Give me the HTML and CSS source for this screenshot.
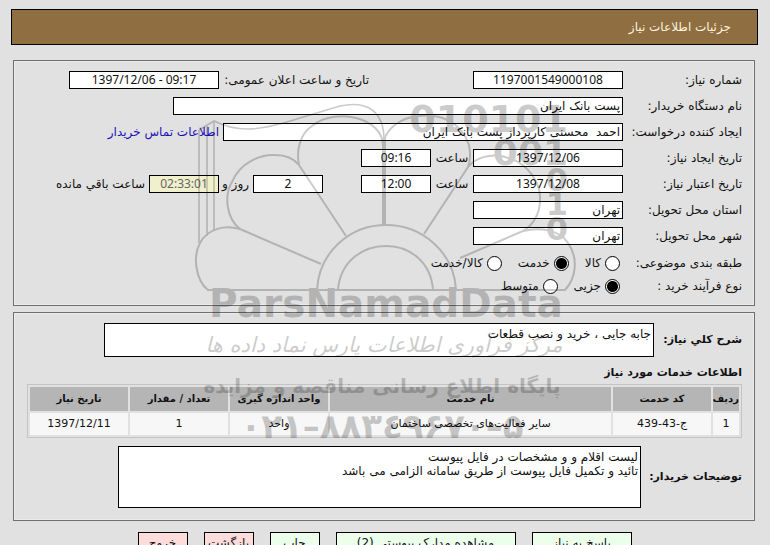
FILE: index.html
```
<!DOCTYPE html>
<html lang="fa" dir="rtl">
<head>
<meta charset="utf-8">
<title>جزئیات اطلاعات نیاز</title>
<link rel="stylesheet" href="styles.css">
</head>
<body>
<main class="page">
  <h1 class="title-bar">جزئیات اطلاعات نیاز</h1>

  <section class="panel request">
    <div class="row">
      <label class="name" for="number">شماره نیاز:</label>
      <input class="box medium number" id="number" value="1197001549000108" readonly>
      <label class="announce" for="announced">تاریخ و ساعت اعلان عمومی:</label>
      <input class="box medium number" id="announced" dir="ltr" value="1397/12/06 - 09:17" readonly>
    </div>
    <div class="row">
      <label class="name" for="buyer">نام دستگاه خریدار:</label>
      <input class="box widest" id="buyer" value="پست بانک ایران" readonly>
    </div>
    <div class="row">
      <label class="name" for="creator">ایجاد کننده درخواست:</label>
      <input class="box wide" id="creator" value="احمد  محسنی کارپرداز پست بانک ایران" readonly>
      <a class="contact" href="#contact">اطلاعات تماس خریدار</a>
    </div>
    <div class="row">
      <label class="name" for="created">تاریخ ایجاد نیاز:</label>
      <input class="box medium number" id="created" value="1397/12/06" readonly>
      <label class="hour" for="created-time">ساعت</label>
      <input class="box small number" id="created-time" value="09:16" readonly>
    </div>
    <div class="row">
      <label class="name" for="valid">تاریخ اعتبار نیاز:</label>
      <input class="box medium number" id="valid" value="1397/12/08" readonly>
      <label class="hour" for="valid-time">ساعت</label>
      <input class="box small number" id="valid-time" value="12:00" readonly>
      <input class="box small number days" id="days" value="2" readonly>
      <label class="days-label" for="days">روز و</label>
      <input class="box small number remaining" id="remaining" value="02:33:01" readonly>
      <label class="after" for="remaining">ساعت باقي مانده</label>
    </div>
    <div class="row">
      <label class="name" for="province">استان محل تحویل:</label>
      <input class="box medium" id="province" value="تهران" readonly>
    </div>
    <div class="row">
      <label class="name" for="city">شهر محل تحویل:</label>
      <input class="box medium" id="city" value="تهران" readonly>
    </div>
    <div class="row options" role="radiogroup" aria-labelledby="kind">
      <span class="name" id="kind">طبقه بندی موضوعی:</span>
      <label class="option"><input type="radio" name="kind">کالا</label>
      <label class="option"><input type="radio" name="kind" checked>خدمت</label>
      <label class="option"><input type="radio" name="kind">کالا/خدمت</label>
    </div>
    <div class="row options" role="radiogroup" aria-labelledby="process">
      <span class="name" id="process">نوع فرآیند خرید :</span>
      <label class="option"><input type="radio" name="process" checked>جزیی</label>
      <label class="option"><input type="radio" name="process">متوسط</label>
    </div>
  </section>

  <section class="panel details">
    <div class="note">
      <label class="strong summary-label" for="summary">شرح کلي نیاز:</label>
      <textarea class="box summary" id="summary" readonly>جابه جایی ، خرید و نصب قطعات</textarea>
    </div>
    <h2 class="strong heading">اطلاعات خدمات مورد نیاز</h2>
    <table class="services">
      <thead>
        <tr><th class="c-row">ردیف</th><th class="c-mid">کد خدمت</th><th>نام خدمت</th><th class="c-mid">واحد اندازه گیری</th><th class="c-mid">تعداد / مقدار</th><th class="c-mid">تاریخ نیاز</th></tr>
      </thead>
      <tbody>
        <tr><td>1</td><td>ج-43-439</td><td>سایر فعالیت‌های تخصصی ساختمان</td><td>واحد</td><td>1</td><td>1397/12/11</td></tr>
      </tbody>
    </table>
    <div class="note">
      <label class="strong remarks-label" for="remarks">توضیحات خریدار:</label>
      <textarea class="box remarks" id="remarks" readonly>لیست اقلام و و مشخصات در فایل پیوست
تائید و تکمیل فایل پیوست از طریق سامانه الزامی می باشد</textarea>
    </div>
  </section>

  <div class="actions">
    <button class="go b-medium" type="button">پاسخ به نیاز</button>
    <button class="go b-wide" type="button">مشاهده مدارک پیوستی (2)</button>
    <button class="go" type="button">چاپ</button>
    <button class="leave" type="button">بازگشت</button>
    <button class="leave" type="button">خروج</button>
  </div>
</main>

<svg class="watermark" viewBox="190 90 390 360" direction="ltr" aria-hidden="true">
  <g fill="none" stroke="#000" stroke-width="2">
    <path d="M199 243V130M207 236V126M214 231V121M199 130L214 121C240 134 262 130 300 118L340 106C368 100 384 112 384 140" stroke-width="1.6"/>
    <path d="M555 290H208C195 280 193 255 200 243C208 228 225 225 240 229L321 264"/>
    <path d="M240 229C226 218 224 195 232 182C240 162 262 154 275 155C287 155 295 160 299 165L346 236"/>
    <path d="M299 165C296 150 300 134 312 126C325 115 345 115 356 118C372 122 383 132 383 146"/>
    <path d="M384 138V225" stroke-width="4"/>
    <path d="M384 140C388 128 400 118 418 116C445 113 462 125 469 145C471 155 470 162 468 167L424 234"/>
    <path d="M468 167C475 158 490 153 505 157C530 163 541 185 540 200C540 215 532 226 523 231L460 258"/>
    <path d="M523 231C540 227 560 230 568 243C578 257 577 277 565 290H555"/>
    <path d="M317 290C319 252 350 225 386 225S454 252 456 290M338 290C340 262 362 246 386 246S431 262 433 290"/>
  </g>
  <g class="wm-bold">
    <text x="568" y="132" font-size="38" text-anchor="end">010101</text>
    <text x="568" y="165" font-size="36" text-anchor="end">001</text>
    <text x="568" y="191" font-size="32" text-anchor="end">0</text>
    <text x="568" y="215" font-size="32" text-anchor="end">1</text>
    <text x="568" y="240" font-size="32" text-anchor="end">0</text>
    <text x="386" y="317" font-size="39" text-anchor="middle">ParsNamadData</text>
    <text x="382" y="393" font-size="20" text-anchor="middle">پایگاه اطلاع رسانی مناقصه و مزایده</text>
    <text x="382" y="438" font-size="34" text-anchor="middle">۰۲۱–۸۸۳٤۹۶۷۰–۵</text>
  </g>
  <text class="wm-script" x="384" y="352" font-size="21" text-anchor="middle">مرکز فرآوری اطلاعات پارس نماد داده ها</text>
</svg>
</body>
</html>
```
FILE: styles.css
```
* { box-sizing: border-box; }
body {
  margin: 0;
  position: relative;
  background: #e1e1e1;
  color: #111;
  font: 12px/18px "DejaVu Sans", sans-serif;
}
.page { padding: 9px 12px 0 11px; }
.title-bar {
  margin: 0 0 15px;
  padding: 8px 26px;
  border: 1px solid #000;
  background: #8f6e41;
  color: #fdf3dc;
  font-size: 12px;
  font-weight: 400;
}
.panel {
  margin: 0 3px 6px 2px;
  padding: 10px 12px;
  border: 1px solid #6f6f6f;
  box-shadow: inset 0 0 0 1px #ececec;
}
.request { padding-bottom: 6px; }
.details { padding-bottom: 12px; }
.row {
  display: flex;
  align-items: center;
  height: 18px;
  margin-bottom: 8px;
  white-space: nowrap;
}
.name { width: 119px; flex: none; }
.box {
  height: 18px;
  margin: 0;
  padding: 0 2px;
  border: 1px solid #000;
  border-radius: 0;
  background: #fff;
  color: #111;
  font: inherit;
  outline: none;
}
.small { width: 70px; }
.medium { width: 150px; }
.wide { width: 400px; }
.widest { width: 450px; }
.number { font-family: "Noto Sans", sans-serif; text-align: center; }
.announce { width: 150px; margin-right: 104px; }
.hour { width: 42px; text-align: center; }
.days { margin-right: 38px; }
.days-label { width: 34px; padding-right: 4px; }
.remaining { background: #f0f0cc; color: #666; }
.after, .contact { margin-right: 4px; }
.contact { color: #1a12b8; text-decoration: none; }
.options { height: 20px; margin-bottom: 3px; }
.option { display: flex; align-items: center; gap: 4px; margin: 0 3px 0 13px; }
.option input {
  appearance: none;
  width: 15px;
  height: 15px;
  margin: 0;
  border: 1px solid #000;
  border-radius: 50%;
  background: #fff;
}
.option input:checked { background: radial-gradient(circle, #000 5px, #fff 6px); }
.note { display: flex; align-items: center; }
.strong { font-size: 11px; font-weight: 700; }
.note .strong { flex: none; white-space: nowrap; }
.summary-label { width: 88px; }
.remarks-label { width: 101px; }
textarea.box { resize: none; overflow: hidden; line-height: 14px; padding: 3px 2px; }
textarea.summary { width: 550px; height: 34px; }
textarea.remarks { width: 523px; height: 62px; }
.heading { margin: 7px 0 2px; }
.services {
  width: calc(100% - 1px);
  margin: 0 0 8px;
  table-layout: fixed;
  border: 1px solid #c4c4c4;
  border-spacing: 2px;
  font-size: 11px;
  line-height: 22px;
  text-align: center;
}
.services th, .services td { padding: 0; white-space: nowrap; overflow: hidden; }
.services th { background: #b5b5b5; line-height: 24px; font-size: 10px; }
.services td { background: #f7f7f7; }
.c-row { width: 26px; }
.c-mid { width: 98px; }
.actions { display: flex; justify-content: center; gap: 16px; margin-top: 11px; }
.actions button {
  width: 50px;
  height: 22px;
  padding: 0;
  border: 1px solid #000;
  color: #111;
  font: inherit;
}
.actions .b-medium { width: 100px; }
.actions .b-wide { width: 180px; }
.actions .go { background: #ebffeb; }
.actions .leave { background: #ffdcdc; }
.watermark {
  position: absolute;
  top: 90px;
  left: 0;
  right: 0;
  margin: 0 auto;
  width: 390px;
  height: 360px;
  opacity: .2;
  pointer-events: none;
}
.wm-bold { font-family: "DejaVu Sans", sans-serif; font-weight: 700; }
.wm-script { font-family: "DejaVu Sans", sans-serif; font-style: italic; }
```
